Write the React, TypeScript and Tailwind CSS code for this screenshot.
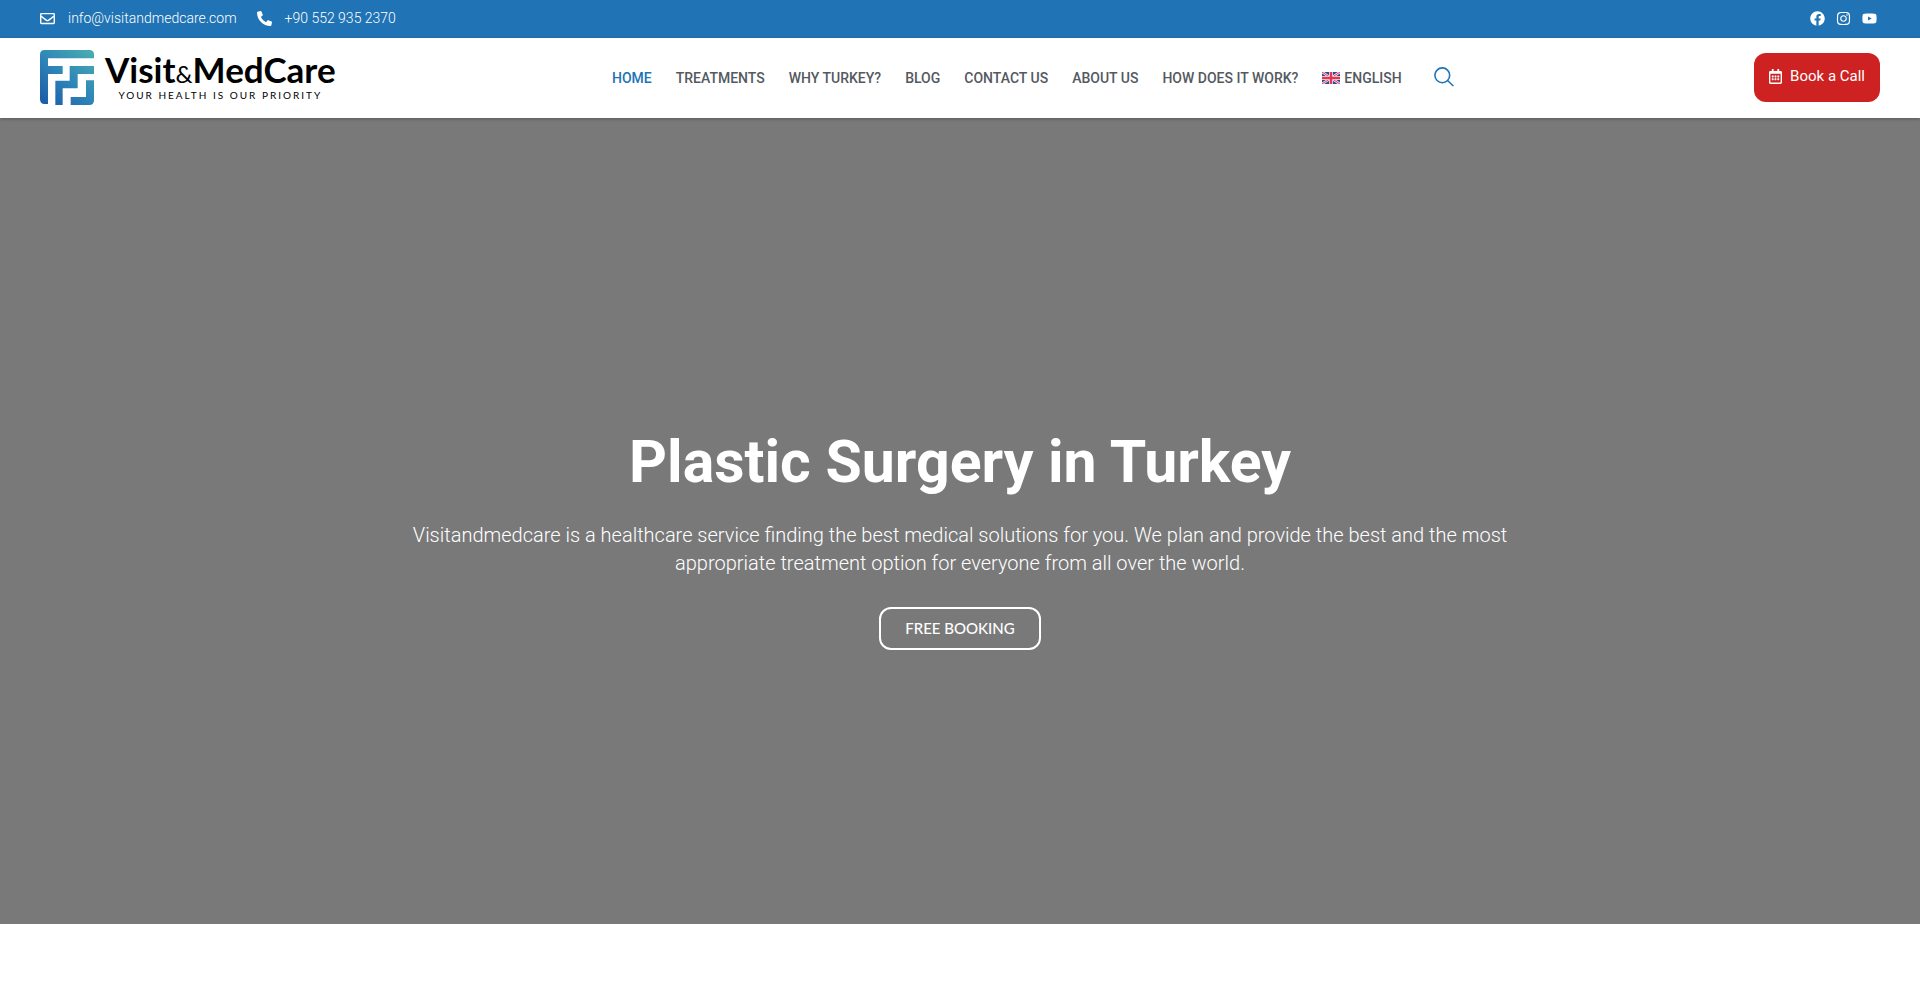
import React from 'react';
import { FaFacebook, FaInstagram, FaPhoneAlt, FaRegCalendarAlt, FaRegEnvelope, FaYoutube } from 'react-icons/fa';

const navItems = [
  { label: 'Home', active: true },
  { label: 'Treatments' },
  { label: 'Why Turkey?' },
  { label: 'Blog' },
  { label: 'Contact Us' },
  { label: 'About Us' },
  { label: 'How does it work?' },
];

const socials = [
  { label: 'Facebook', icon: FaFacebook },
  { label: 'Instagram', icon: FaInstagram },
  { label: 'Youtube', icon: FaYoutube },
];

function LogoMark() {
  return (
    <svg viewBox="0 0 162 165" className="h-[55px] w-[54px]" aria-hidden="true">
      <defs>
        <linearGradient id="mark" gradientUnits="userSpaceOnUse" x1="150" y1="10" x2="20" y2="160">
          <stop offset="0" stopColor="#46aab0" />
          <stop offset="0.5" stopColor="#2f86b8" />
          <stop offset="1" stopColor="#1c5fa8" />
        </linearGradient>
      </defs>
      <g fill="url(#mark)">
        <path d="M14 0H148Q162 0 162 14V25H24V48H68V72H24V162H14Q0 162 0 148V14Q0 0 14 0Z" />
        <path d="M89 48H162V72H113V115H68V165H46V92H89Z" />
        <path d="M138 91H162V151Q162 165 148 165H92V141H138Z" />
      </g>
    </svg>
  );
}

function Flag() {
  return (
    <svg viewBox="0 0 36 24" className="h-3 w-[18px]" aria-hidden="true">
      <path fill="#1f4ea1" d="M0 0H36V24H0Z" />
      <path stroke="#f3dfe8" strokeWidth="5" d="M0 0L36 24M36 0L0 24" />
      <path stroke="#e2445c" strokeWidth="2" d="M0 0L36 24M36 0L0 24" />
      <path stroke="#f8eaf0" strokeWidth="8" d="M18 0V24M0 12H36" />
      <path stroke="#e2384f" strokeWidth="5" d="M18 0V24M0 12H36" />
    </svg>
  );
}

function TopBar() {
  return (
    <div className="flex h-[38px] items-center justify-between bg-[#2073b4] px-10 pb-0.5 text-sm font-light text-white">
      <div className="flex items-center gap-5">
        <a href="mailto:info@visitandmedcare.com" className="flex items-center gap-[13px]">
          <FaRegEnvelope className="size-[15px]" />
          info@visitandmedcare.com
        </a>
        <a href="tel:+905529352370" className="flex items-center gap-[13px]">
          <FaPhoneAlt className="size-[15px]" />
          +90 552 935 2370
        </a>
      </div>
      <div className="flex items-center gap-[11px] pr-[3px]">
        {socials.map(({ label, icon: Icon }) => (
          <a key={label} href="#" aria-label={label}>
            <Icon className="size-[15px]" />
          </a>
        ))}
      </div>
    </div>
  );
}

function Header() {
  return (
    <header className="relative flex h-20 items-center justify-between bg-white px-10 pb-0.5 shadow-[0_1px_3px_rgba(0,0,0,0.25)]">
      <a href="#" className="flex items-center gap-[11px]">
        <LogoMark />
        <span className="flex flex-col items-center font-[Lato,sans-serif] text-black">
          <span className="text-[35px] leading-[30px] font-bold">
            Visit<span className="text-[24px] font-normal">&amp;</span>MedCare
          </span>
          <span className="text-[10px] leading-3 tracking-[0.2em]">YOUR HEALTH IS OUR PRIORITY</span>
        </span>
      </a>

      <nav className="flex items-center gap-6 pt-0.5 pr-6 text-sm font-medium text-[#54595f] uppercase">
        {navItems.map((item) => (
          <a key={item.label} href="#" className={item.active ? 'text-[#2073b4]' : ''}>
            {item.label}
          </a>
        ))}
        <a href="#" className="flex items-center gap-1">
          <Flag />
          English
        </a>
        <button type="button" aria-label="Search" className="ml-2 pb-0.5 text-[#2073b4]">
          <svg viewBox="0 0 20 20" className="size-5" fill="none" stroke="currentColor" strokeWidth="1.6">
            <circle cx="8.3" cy="8.3" r="7.4" />
            <path d="M13.5 13.5L19.4 19" />
          </svg>
        </button>
      </nav>

      <button
        type="button"
        className="flex h-[49px] items-center gap-2 rounded-xl bg-[#cd2122] px-[15px] pb-0.5 text-[15px] text-white"
      >
        <FaRegCalendarAlt className="h-[15px] w-[13px]" />
        Book a Call
      </button>
    </header>
  );
}

function Hero() {
  return (
    <section className="flex flex-col items-center bg-[#797979] px-6 pt-[309px] pb-[274px] text-center text-white">
      <h1 className="text-[59px] leading-[70px] font-bold">Plastic Surgery in Turkey</h1>
      <p className="mt-6 max-w-[1140px] text-xl leading-7 font-light">
        Visitandmedcare is a healthcare service finding the best medical solutions for you. We plan and provide the
        best and the most appropriate treatment option for everyone from all over the world.
      </p>
      <button
        type="button"
        className="mt-[30px] h-[43px] rounded-xl border-2 border-white px-6 font-[Lato,sans-serif] text-[15px] font-medium"
      >
        FREE BOOKING
      </button>
    </section>
  );
}

export default function App() {
  return (
    <div className="min-h-screen bg-white font-[Roboto,sans-serif]">
      <TopBar />
      <Header />
      <main>
        <Hero />
      </main>
    </div>
  );
}
